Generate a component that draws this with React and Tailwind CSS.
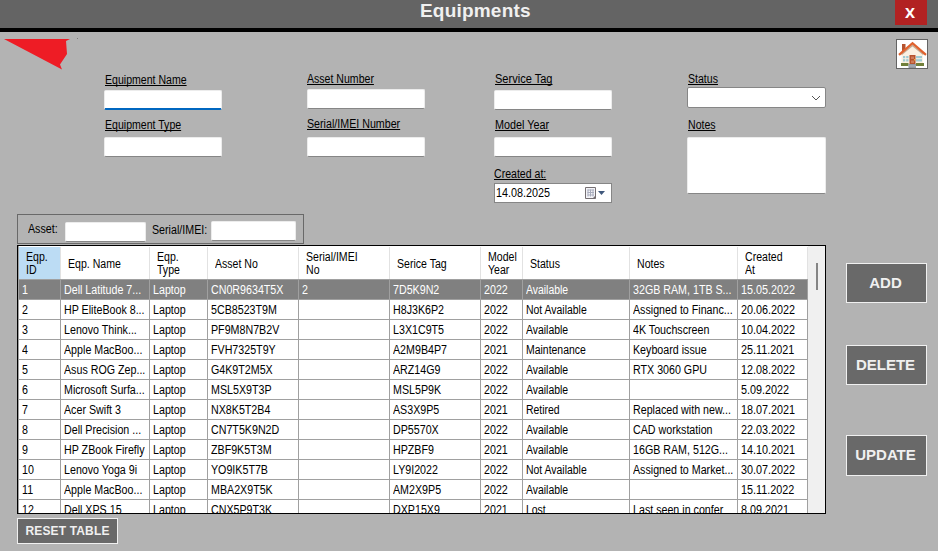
const COLS = [
  { key: "id", title: ["Eqp.", "ID"], w: "w-[42px]" },
  { key: "name", title: ["Eqp. Name"], w: "w-[89px]" },
  { key: "type", title: ["Eqp.", "Type"], w: "w-[58px]" },
  { key: "asset", title: ["Asset No"], w: "w-[91px]" },
  { key: "serial", title: ["Serial/IMEI", "No"], w: "w-[91px]" },
  { key: "tag", title: ["Serice Tag"], w: "w-[91px]" },
  { key: "year", title: ["Model", "Year"], w: "w-[42px]" },
  { key: "status", title: ["Status"], w: "w-[107px]" },
  { key: "notes", title: ["Notes"], w: "w-[108px]" },
  { key: "created", title: ["Created", "At"], w: "w-[70px]" },
];

const ROWS = [
  ["1", "Dell Latitude 7...", "Laptop", "CN0R9634T5X", "2", "7D5K9N2", "2022", "Available", "32GB RAM, 1TB S...", "15.05.2022"],
  ["2", "HP EliteBook 8...", "Laptop", "5CB8523T9M", "", "H8J3K6P2", "2022", "Not Available", "Assigned to Financ...", "20.06.2022"],
  ["3", "Lenovo Think...", "Laptop", "PF9M8N7B2V", "", "L3X1C9T5", "2022", "Available", "4K Touchscreen", "10.04.2022"],
  ["4", "Apple MacBoo...", "Laptop", "FVH7325T9Y", "", "A2M9B4P7", "2021", "Maintenance", "Keyboard issue", "25.11.2021"],
  ["5", "Asus ROG Zep...", "Laptop", "G4K9T2M5X", "", "ARZ14G9", "2022", "Available", "RTX 3060 GPU", "12.08.2022"],
  ["6", "Microsoft Surfa...", "Laptop", "MSL5X9T3P", "", "MSL5P9K", "2022", "Available", "", "5.09.2022"],
  ["7", "Acer Swift 3", "Laptop", "NX8K5T2B4", "", "AS3X9P5", "2021", "Retired", "Replaced with new...", "18.07.2021"],
  ["8", "Dell Precision ...", "Laptop", "CN7T5K9N2D", "", "DP5570X", "2022", "Available", "CAD workstation", "22.03.2022"],
  ["9", "HP ZBook Firefly", "Laptop", "ZBF9K5T3M", "", "HPZBF9", "2021", "Available", "16GB RAM, 512G...", "14.10.2021"],
  ["10", "Lenovo Yoga 9i", "Laptop", "YO9IK5T7B", "", "LY9I2022", "2022", "Not Available", "Assigned to Market...", "30.07.2022"],
  ["11", "Apple MacBoo...", "Laptop", "MBA2X9T5K", "", "AM2X9P5", "2022", "Available", "", "15.11.2022"],
  ["12", "Dell XPS 15", "Laptop", "CNX5P9T3K", "", "DXP15X9", "2021", "Lost", "Last seen in confer", "8.09.2021"],
];

// Slightly condensed interface text.
function T({ children, className = "scale-x-[0.89]" }) {
  return <span className={`inline-block origin-left whitespace-nowrap ${className}`}>{children}</span>;
}

function Label({ children, className = "pl-px", scale = "scale-x-[0.88]" }) {
  return (
    <div className={`h-[15px] leading-[17px] ${className}`}>
      <T className={`${scale} underline underline-offset-1 [text-decoration-skip-ink:none]`}>{children}</T>
    </div>
  );
}

function Box({ className = "", focus = false }) {
  return (
    <div
      className={`rounded-[2px] border border-[#ececec] bg-white ${focus ? "border-b-2 border-b-[#0067c0]" : "border-b-[#868686]"} ${className}`}
    />
  );
}

function ActionButton({ children, className }) {
  return (
    <button
      className={`flex shrink-0 items-center justify-center border border-[#f0f0f0] bg-[#696969] font-bold text-[#f0f0f0] ${className}`}
    >
      {children}
    </button>
  );
}

function House() {
  return (
    <svg width="30" height="28" viewBox="0 0 30 28" className="block">
      <path d="M5 4h3.500v8H5z" fill="#b5532f" />
      <path d="M4.500 13 15.500 4l10.500 9v12h-21.500z" fill="#fbf1e2" />
      <path d="M4.500 14.500 15.500 5.500l11 9" fill="none" stroke="#c3ab94" strokeWidth="1.500" />
      <path d="M2 14.800 15.500 3.200 29 14.800" fill="none" stroke="#e0622e" strokeWidth="2.300" />
      <path d="M6 16h5.500v5.500H6zM19 16h6v5.500h-6z" fill="#9fcbd4" />
      <path d="M5.500 18.700h6.500M18.500 18.700H25M8.700 16v6" stroke="#fbf1e2" strokeWidth="1" />
      <path d="M12.500 15h6v9h-6z" fill="#b5532f" />
      <path d="M14 16.500h3V19h-3zM14 20.500h3V23h-3z" fill="#d07b58" />
      <path d="M17 19h1v1.500h-1z" fill="#f0b429" />
      <path d="M4 23h7.500v3H4zM19 23h8v3h-8z" fill="#71803a" />
      <path d="M11.500 24h7.500v4h-7.500z" fill="#9297a0" />
      <path d="M11.500 26H19" stroke="#b9bdc4" strokeWidth=".8" />
    </svg>
  );
}

function Table() {
  return (
    <div className="flex h-[269px] w-[809px] overflow-hidden border border-black bg-white">
      <div className="w-[790px] shrink-0 border-l border-[#a0a0a0]">
        <div className="flex h-[34px] border-b border-[#a0a0a0] pt-px">
          {COLS.map((c, i) => (
            <div
              key={c.key}
              className={`${c.w} flex shrink-0 flex-col justify-center border-r border-[#e2e2e2] pt-0.5 pl-[7px] leading-[13px] ${i === 0 ? "bg-[#bcdcf4]" : ""}`}
            >
              {c.title.map((t) => (
                <T key={t} className="scale-x-[0.88]">{t}</T>
              ))}
            </div>
          ))}
        </div>
        {ROWS.map((r, n) => (
          <div
            key={r[0]}
            className={`flex h-5 ${n === 0 ? "bg-[#808080] text-white" : ""}`}
          >
            {r.map((v, i) => (
              <div
                key={i}
                className={`${COLS[i].w} h-5 shrink-0 border-r border-b border-[#a0a0a0] pl-[3px] leading-5`}
              >
                <T className={i === 7 ? "scale-x-[0.87]" : i === 9 ? "scale-x-90" : "scale-x-[0.89]"}>{v}</T>
              </div>
            ))}
          </div>
        ))}
      </div>
      <div className="flex flex-1 justify-center bg-[#f0f0f0] pt-[17px]">
        <div className="h-[27px] w-0.5 bg-[#858585]" />
      </div>
    </div>
  );
}

export default function App() {
  return (
    <div className="h-[551px] w-[938px] overflow-hidden bg-[#b3b3b3] font-['Liberation_Sans',Arial,sans-serif] text-[12px] text-black">
      <header className="flex h-8 items-start border-b-4 border-black bg-[#646464]">
        <h1 className="ml-[420px] h-7 w-[475px] text-[19px] leading-[21px] font-bold tracking-[0.2px] text-[#f0f0f0]">
          Equipments
        </h1>
        <button className="h-[25px] w-8 bg-[#b22222] pr-0.5 font-['Noto_Sans',sans-serif] text-[15px] leading-[23px] font-bold text-white">
          X
        </button>
      </header>

      <section className="flex h-[182px] items-start">
        <div className="w-[104px] shrink-0 pt-[6px] pl-[3px]">
          <svg width="76" height="34" viewBox="0 0 76 34" className="block">
            <path d="M1 1h66l-4 2 1 13-7 10.500 2 5z" fill="#ee1c25" />
            <path d="M74 0h1v1h-1z" fill="#7d7d7d" />
          </svg>
        </div>
        <div className="w-[118px] shrink-0 pt-10">
          <Label>Equipment Name</Label>
          <Box focus className="mt-[3px] h-5" />
          <Label className="mt-[7px] pl-px">Equipment Type</Label>
          <Box className="mt-[5px] h-5" />
        </div>
        <div className="ml-[85px] w-[118px] shrink-0 pt-[39px]">
          <Label className="">Asset Number</Label>
          <Box className="mt-[3px] h-5" />
          <Label className="mt-[7px]" scale="scale-x-[0.89]">Serial/IMEI Number</Label>
          <Box className="mt-[6px] h-5" />
        </div>
        <div className="ml-[69px] w-[118px] shrink-0 pt-[39px]">
          <Label scale="scale-x-[0.92]">Service Tag</Label>
          <Box className="mt-1 h-5" />
          <Label className="mt-[7px] pl-px" scale="scale-x-90">Model Year</Label>
          <Box className="mt-[5px] h-5" />
          <Label className="mt-[9px]">Created at:</Label>
          <div className="mt-[2px] flex h-5 items-center border border-[#868686] bg-white pl-px">
            <div className="w-[88px]">
              <T className="scale-x-90">14.08.2025</T>
            </div>
            <svg width="24" height="14" viewBox="0 0 24 14">
              <path d="M1.500 1.500h10v11h-10z" fill="#f4f4f8" stroke="#746f72" />
              <path d="M3.500 4h6.500M3.500 6.500h6.500M3.500 9h6.500M4 3.500v7M6.500 3.500v7M9 3.500v7" stroke="#a9adbd" strokeWidth="1" />
              <path d="M8.500 12.500h3v-3z" fill="#746f72" />
              <path d="M14 5h7l-3.500 4z" fill="#40587c" />
            </svg>
          </div>
        </div>
        <div className="ml-[75px] w-[139px] shrink-0 pt-[39px]">
          <Label>Status</Label>
          <div className="mt-px flex h-[21px] items-center justify-end rounded-[2px] border border-[#868686] bg-white pr-1">
            <svg width="10" height="6" viewBox="0 0 10 6" fill="none" stroke="#555">
              <path d="m1 1 4 4 4-4" />
            </svg>
          </div>
          <Label className="mt-[9px] pl-px">Notes</Label>
          <Box className="mt-[5px] h-[57px]" />
        </div>
        <button className="mt-[7px] ml-[70px] h-[30px] w-8 shrink-0 border border-[#646464] bg-white">
          <House />
        </button>
      </section>

      <div className="flex">
        <div className="ml-[17px] w-[809px] shrink-0">
          <div className="mb-px flex h-[30px] w-[287px] items-start border border-[#696969]">
            <div className="w-[47px] pt-[7px] pl-[10px] leading-[15px]">
              <T>Asset:</T>
            </div>
            <Box className="mt-[7px] h-5 w-[81px]" />
            <div className="w-[65px] pt-2 pl-[6px] leading-[15px]">
              <T>Serial/IMEI:</T>
            </div>
            <Box className="mt-[6px] h-5 w-[85px]" />
          </div>
          <Table />
          <ActionButton className="mt-1 h-[26px] w-[101px] text-[12px] tracking-[0.15px]">RESET TABLE</ActionButton>
        </div>
        <div className="ml-5 flex w-[81px] flex-col pt-[49px]">
          <ActionButton className="h-10 pr-0.5 text-[15px]">ADD</ActionButton>
          <ActionButton className="mt-[42px] h-10 pr-0.5 text-[15px]">DELETE</ActionButton>
          <ActionButton className="mt-[50px] h-[41px] pr-0.5 text-[15px]">UPDATE</ActionButton>
        </div>
      </div>
    </div>
  );
}
